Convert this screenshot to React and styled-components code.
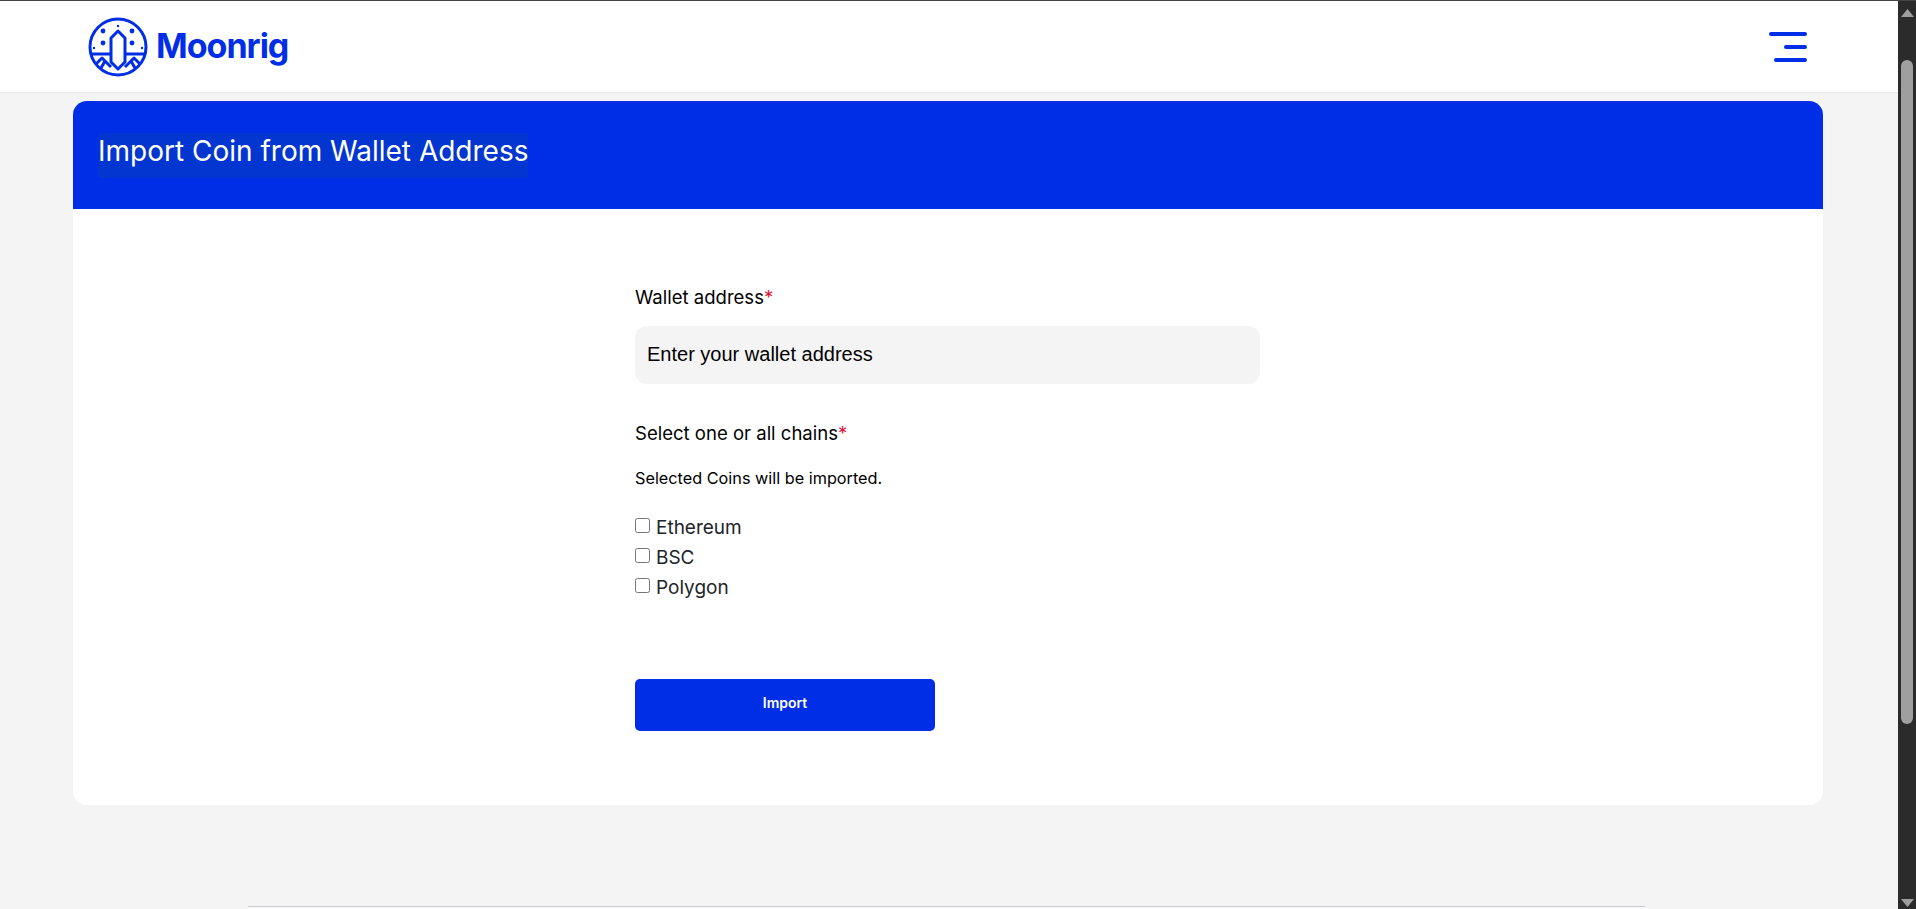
import React from 'react'
import styled, { createGlobalStyle } from 'styled-components'

const blue = '#002de6'

const GlobalStyle = createGlobalStyle`
    * {
        box-sizing: border-box;
    }
    html,
    body {
        margin: 0;
        height: 100%;
        overflow: hidden;
    }
    body {
        font-family: Inter, 'Liberation Sans', sans-serif;
        color: #000;
    }
`

const Screen = styled.div`
    display: flex;
    height: 909px;
    border-top: 1px solid #444;
`

const Page = styled.div`
    flex: 1;
    min-width: 0;
    display: flex;
    flex-direction: column;
    background: #f4f4f4;
`

const Header = styled.header`
    height: 92px;
    flex: none;
    display: flex;
    align-items: center;
    justify-content: space-between;
    padding: 0 91px 0 88px;
    background: #fff;
    border-bottom: 1px solid #ebebeb;
`

const Logo = styled.div`
    display: flex;
    align-items: center;
    gap: 8px;
    color: ${blue};
    svg {
        display: block;
    }
`

const LogoText = styled.span`
    padding-bottom: 2px;
    font-size: 34px;
    font-weight: 700;
    line-height: 40px;
    letter-spacing: -1px;
`

const MenuButton = styled.button`
    width: 38px;
    height: 30px;
    padding: 0;
    border: 0;
    background: none;
    display: flex;
    flex-direction: column;
    align-items: flex-end;
    justify-content: space-between;
`

const MenuLine = styled.span`
    display: block;
    height: 4px;
    width: ${(p) => p.$w}px;
    border-radius: 2px;
    background: ${blue};
`

const Main = styled.main`
    flex: 1;
    padding: 8px 75px 0 73px;
`

const CardHead = styled.div`
    height: 108px;
    display: flex;
    align-items: center;
    padding: 0 25px;
    background: ${blue};
    border-radius: 14px 14px 0 0;
`

const Title = styled.h1`
    margin: 0;
    padding: 0 0 9px;
    font-size: 28px;
    font-weight: 400;
    line-height: 36px;
    color: #fff;
    background: #0336d0;
`

const CardBody = styled.div`
    height: 596px;
    padding: 76px 0 0 562px;
    background: #fff;
    border-radius: 0 0 14px 14px;
`

const Label = styled.div`
    font-size: 18.55px;
    line-height: 24px;
    span {
        color: #e0103a;
    }
`

const WalletInput = styled.input`
    display: block;
    width: 625px;
    height: 58px;
    margin: 17px 0 37px;
    padding: 0 12px 1px;
    border: 0;
    outline: 0;
    border-radius: 12px;
    background: #f4f4f4;
    font-family: 'Liberation Sans', Arial, sans-serif;
    font-size: 20px;
    &::placeholder {
        color: #000;
        opacity: 1;
    }
`

const Hint = styled.p`
    margin: 22px 0 23px;
    font-size: 16.25px;
    line-height: 22px;
`

const ChainList = styled.div`
    display: flex;
    flex-direction: column;
`

const Chain = styled.label`
    display: flex;
    align-items: center;
    gap: 6px;
    height: 30px;
    font-size: 19px;
    color: #212529;
    input {
        width: 15px;
        height: 15px;
        margin: 0 0 3px;
    }
`

const ImportButton = styled.button`
    display: block;
    width: 300px;
    height: 52px;
    margin-top: 77px;
    padding: 0 0 5px;
    border: 0;
    border-radius: 5px;
    background: ${blue};
    color: #fff;
    font-family: Inter, sans-serif;
    font-size: 14px;
    font-weight: 600;
`

const FooterEdge = styled.div`
    height: 3px;
    margin: 0 253px 0 248px;
    border-top: 1px solid #c9c9c9;
    background: #f9f9fd;
`

const ScrollTrack = styled.div`
    width: 18px;
    flex: none;
    display: flex;
    flex-direction: column;
    align-items: center;
    padding-top: 8px;
    background: #2b2b2b;
`

const ScrollThumb = styled.div`
    width: 12px;
    height: 664px;
    margin: 43px 0 auto;
    border-radius: 6px;
    background: #9f9f9f;
`

const Arrow = styled.svg`
    display: block;
    flex: none;
    margin-bottom: ${(p) => (p.$down ? '2px' : '0')};
`

const chains = ['Ethereum', 'BSC', 'Polygon']

const App = () => {
    return (
        <>
            <GlobalStyle />
            <Screen>
                <Page>
                    <Header>
                        <Logo>
                            <svg width="60" height="60" viewBox="0 0 60 60" fill="none" stroke={blue} strokeWidth="3">
                                <circle cx="30" cy="30" r="28" />
                                <path d="M30 14 L37 21 V45 L30 52 L23 45 V21 Z" strokeLinejoin="round" />
                                <path d="M3 37 H23 M37 37 H57" />
                                <path d="M8 47 L14 41 L23 50 M37 50 L46 41 L52 47 M17 44 L13 51 M43 44 L47 51" strokeLinejoin="round" />
                                <g fill={blue} stroke="none">
                                    <circle cx="15" cy="14" r="2.4" />
                                    <circle cx="44" cy="14" r="2.4" />
                                    <circle cx="15" cy="26" r="2.4" />
                                    <circle cx="44" cy="26" r="2.4" />
                                    <circle cx="30" cy="9" r="1.2" />
                                    <circle cx="6" cy="31" r="1.2" />
                                    <circle cx="54" cy="31" r="1.2" />
                                </g>
                            </svg>
                            <LogoText>Moonrig</LogoText>
                        </Logo>
                        <MenuButton aria-label="Menu">
                            <MenuLine $w={38} />
                            <MenuLine $w={23} />
                            <MenuLine $w={33} />
                        </MenuButton>
                    </Header>
                    <Main>
                        <CardHead>
                            <Title>Import Coin from Wallet Address</Title>
                        </CardHead>
                        <CardBody>
                            <Label>
                                Wallet address<span>*</span>
                            </Label>
                            <WalletInput placeholder="Enter your wallet address" />
                            <Label>
                                Select one or all chains<span>*</span>
                            </Label>
                            <Hint>Selected Coins will be imported.</Hint>
                            <ChainList>
                                {chains.map((chain) => (
                                    <Chain key={chain}>
                                        <input type="checkbox" />
                                        {chain}
                                    </Chain>
                                ))}
                            </ChainList>
                            <ImportButton>Import</ImportButton>
                        </CardBody>
                    </Main>
                    <FooterEdge />
                </Page>
                <ScrollTrack>
                    <Arrow width="13" height="8" viewBox="0 0 13 8">
                        <path d="M6.5 0 L13 8 H0 Z" fill="#9f9f9f" />
                    </Arrow>
                    <ScrollThumb />
                    <Arrow $down width="13" height="8" viewBox="0 0 13 8">
                        <path d="M0 0 H13 L6.5 8 Z" fill="#9f9f9f" />
                    </Arrow>
                </ScrollTrack>
            </Screen>
        </>
    )
}

export default App
